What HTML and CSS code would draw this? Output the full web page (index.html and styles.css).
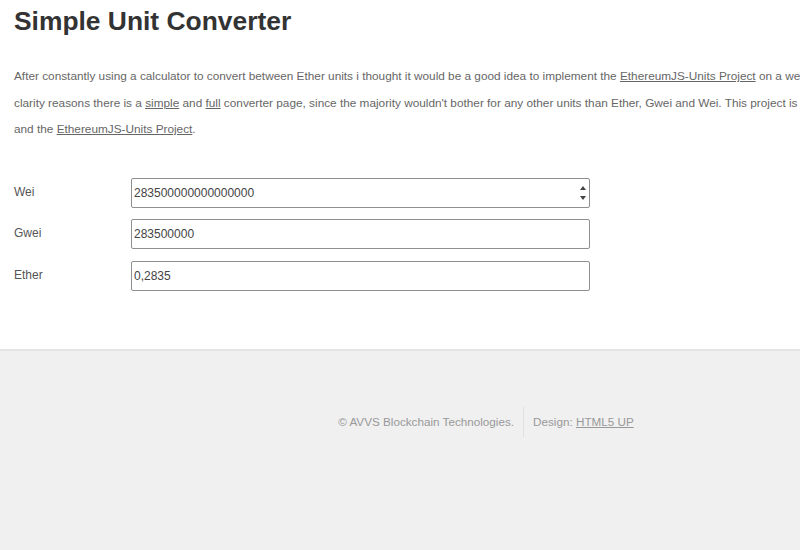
FILE: index.html
```html
<!DOCTYPE html>
<html>
<head>
<meta charset="utf-8">
<link rel="stylesheet" href="styles.css">
</head>
<body>
<div class="page">
  <main class="main">
    <h1 class="title">Simple Unit Converter</h1>
    <p class="intro">After constantly using a calculator to convert between Ether units i thought it would be a good idea to implement the <a href="#">EthereumJS-Units Project</a> on a website. For<br>clarity reasons there is a <a href="#">simple</a> and <a href="#">full</a> converter page, since the majority wouldn't bother for any other units than Ether, Gwei and Wei. This project is using JavaScript<br>and the <a href="#">EthereumJS-Units Project</a>.</p>
    <form class="form">
      <div class="row">
        <label class="label">Wei</label>
        <div class="field">
          <input class="input" type="text" value="283500000000000000">
          <span class="spin"><span class="up"></span><span class="down"></span></span>
        </div>
      </div>
      <div class="row">
        <label class="label">Gwei</label>
        <div class="field"><input class="input" type="text" value="283500000"></div>
      </div>
      <div class="row">
        <label class="label">Ether</label>
        <div class="field"><input class="input" type="text" value="0,2835"></div>
      </div>
    </form>
  </main>
  <footer class="footer">
    <ul class="copyright">
      <li class="item">© AVVS Blockchain Technologies.</li>
      <li class="item sep">Design: <a href="#">HTML5 UP</a></li>
    </ul>
  </footer>
</div>
</body>
</html>
```
FILE: styles.css
```css
html, body {
  margin: 0;
  padding: 0;
  overflow: hidden;
  background: #f0f0f0;
}
body {
  font-family: "Liberation Sans", Arial, sans-serif;
  color: #666;
}
.page {
  width: 972px;
}
.main {
  background: #fff;
  padding: 6px 14px 58px 14px;
  border-bottom: 2px solid #e4e4e4;
}
.title {
  margin: 0;
  font-size: 26.4px;
  font-weight: bold;
  color: #333;
  line-height: 30px;
}
.intro {
  margin: 27px 0 0 0;
  white-space: nowrap;
  font-size: 11.8px;
  line-height: 26.5px;
  color: #666;
}
.intro a {
  color: #666;
  text-decoration: underline;
}
.form {
  margin-top: 35px;
  display: flex;
  flex-direction: column;
  gap: 11.5px;
}
.row {
  display: flex;
  align-items: center;
}
.label {
  width: 117px;
  font-size: 12px;
  color: #555;
  margin-top: -2px;
}
.field {
  position: relative;
  width: 459px;
}
.input {
  box-sizing: border-box;
  width: 459px;
  height: 30px;
  margin: 0;
  padding: 0 2px;
  border: 1px solid #8f8f8f;
  border-radius: 2px;
  font-family: "Liberation Sans", Arial, sans-serif;
  font-size: 12px;
  color: #444;
  background: #fff;
  outline: none;
}
.spin {
  position: absolute;
  right: 3px;
  top: 4px;
  width: 9px;
  height: 22px;
  display: flex;
  flex-direction: column;
  align-items: center;
  justify-content: center;
  gap: 6px;
}
.up {
  width: 0;
  height: 0;
  border-left: 3px solid transparent;
  border-right: 3px solid transparent;
  border-bottom: 4px solid #444;
}
.down {
  width: 0;
  height: 0;
  border-left: 3px solid transparent;
  border-right: 3px solid transparent;
  border-top: 4px solid #444;
}
.footer {
  background: #f0f0f0;
  padding: 56px 0 0 0;
  height: 200px;
}
.copyright {
  margin: 0;
  padding: 0;
  list-style: none;
  display: flex;
  justify-content: center;
  font-size: 11.7px;
  color: #999;
}
.item {
  line-height: 30px;
  padding: 0 9px;
}
.sep {
  border-left: 1px solid #e0e0e0;
}
.item a {
  color: #999;
  text-decoration: underline;
}
```
